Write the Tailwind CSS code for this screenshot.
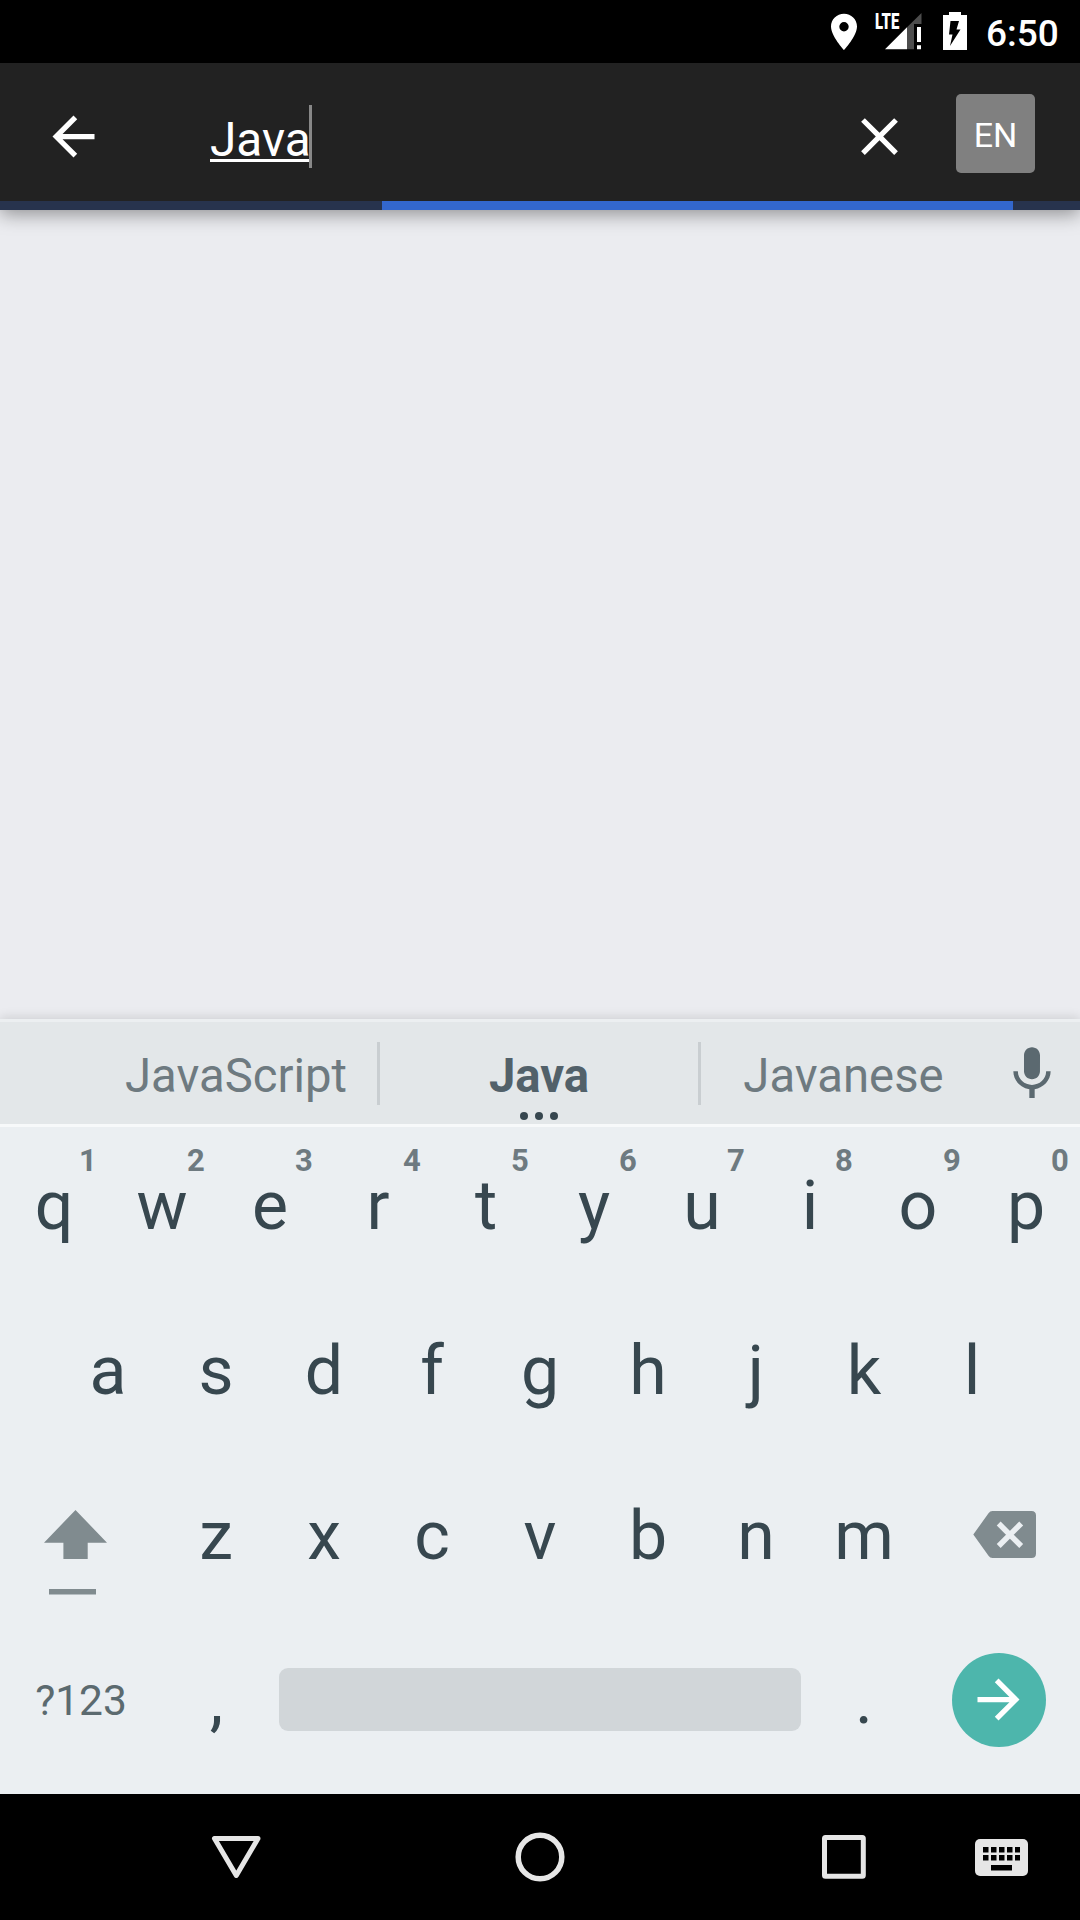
<!DOCTYPE html>
<html lang="en">
<head>
<meta charset="utf-8">
<title>Search</title>
<script src="https://cdn.jsdelivr.net/npm/@tailwindcss/browser@4"></script>
</head>
<body class="flex h-[1920px] w-[1080px] flex-col overflow-hidden bg-[#ebecf0] font-['Roboto',sans-serif]">

<!-- Status bar -->
<header class="flex h-[63px] shrink-0 items-start bg-black pl-[831px] text-white">
  <svg class="mt-[13px] h-[38px] w-[26px]" viewBox="0 0 26 38" fill="#fff"><path fill-rule="evenodd" d="M13 .7C5.800.7 0 6.300 0 13.600C0 23 13 37.300 13 37.300S26 23 26 13.600C26 6.300 20.200.7 13 .7ZM13 9a4.700 4.700 0 1 1 0 9.400A4.700 4.700 0 1 1 13 9Z"/></svg>
  <div class="relative ml-[18px] h-[50px] w-[48px]">
    <span class="absolute left-0 top-[11px] origin-left scale-x-[0.66] text-[22.500px]/[21px] font-black">LTE</span>
    <svg class="absolute left-0 top-0" width="48" height="50" fill="#fff"><path d="M10 49.300L32 27.300V49.300Z"/><path fill="#4d4d4d" d="M32 27.300L46.500 13V24H39V49.300H32Z"/><path d="M42 27h4v15h-4zM42 45.300h4v4h-4z"/></svg>
  </div>
  <svg class="ml-5 mt-3 h-[38px] w-[24px]" viewBox="0 0 24 38"><path fill="#fff" d="M6 0H18V3H24V38H0V3H6Z"/><path d="M7.500 9H16L13.500 17.500H17.500L7 34L9.500 22.500H6Z"/></svg>
  <span class="ml-[19px] mt-[12px] text-[37px]/[44px] font-medium">6:50</span>
</header>

<!-- Search bar -->
<section class="relative z-10 h-[147px] shrink-0 bg-[#222222] shadow-[0_4px_18px_rgba(0,0,0,0.4)]">
  <div class="flex h-[137px] items-start">
    <svg class="ml-[42px] mt-[42px] h-[63px] w-[63px]" viewBox="0 0 24 24" fill="#fff"><path d="M20 11H7.830l5.590-5.590L12 4l-8 8 8 8 1.410-1.410L7.830 13H20v-2z"/></svg>
    <div class="ml-[105px] mt-[42px] flex h-[63px] w-[638px]">
      <div class="h-[57px] w-[101px] border-b-[3px] border-white text-[47.750px]/[70px] text-white">Java</div>
      <div class="-ml-[2px] h-[63px] w-[3px] bg-[#888888]"></div>
    </div>
    <svg class="mt-[42px] h-[63px] w-[63px]" viewBox="0 0 24 24" fill="#fff"><path d="M19 6.410L17.590 5 12 10.590 6.410 5 5 6.410 10.590 12 5 17.590 6.410 19 12 13.410 17.590 19 19 17.590 13.410 12z"/></svg>
    <div class="ml-[45px] mt-[31px] flex h-[79px] w-[79px] items-center justify-center rounded-[5px] bg-[#808080] pt-[2px] text-[34px]/[40px] text-white">EN</div>
  </div>
  <div class="mt-[0.500px] flex h-[9px] bg-[#27334d] pl-[382px]"><div class="w-[631px] bg-[#3367cd]"></div></div>
</section>

<main class="flex-1"></main>

<!-- Suggestions -->
<section class="flex h-[108px] shrink-0 items-start border-y-[3px] border-t-[#eceff1] border-b-[#f7f9fa] bg-[#e3e7e9] pl-[95px] text-[47.250px]/[63px] text-[#6e7a80] shadow-[0_-2px_10px_rgba(0,0,0,0.120)]">
  <div class="mt-[23px] w-[282px] text-center">JavaScript</div>
  <div class="mt-[20px] h-[63px] w-[3px] bg-[#c9ced1]"></div>
  <div class="w-[318px] text-center">
    <div class="mt-[23px] h-[63px] font-bold text-[#52616a]">Java</div>
    <div class="mt-[4px] flex justify-center gap-[7px]"><i class="h-2 w-2 rounded-full bg-[#37474f]"></i><i class="h-2 w-2 rounded-full bg-[#37474f]"></i><i class="h-2 w-2 rounded-full bg-[#37474f]"></i></div>
  </div>
  <div class="mt-[20px] h-[63px] w-[3px] bg-[#c9ced1]"></div>
  <div class="mt-[23px] w-[285px] text-center">Javanese</div>
  <svg class="ml-[14px] mt-[20px] h-[64px] w-[64px]" viewBox="0 0 24 24" fill="#5b6970"><path d="M12 14c1.660 0 2.990-1.340 2.990-3L15 5c0-1.660-1.340-3-3-3S9 3.340 9 5v6c0 1.660 1.340 3 3 3zm5.300-3c0 3-2.540 5.100-5.300 5.100S6.700 14 6.700 11H5c0 3.410 2.720 6.230 6 6.720V21h2v-3.280c3.280-.48 6-3.300 6-6.720h-1.700z"/></svg>
</section>

<!-- Keyboard -->
<section class="h-[667px] shrink-0 bg-[#ebeff2] text-center text-[68px]/[158px] text-[#37474f]">
  <div class="grid h-[162px] grid-cols-10">
    <div class="relative">q<sup class="absolute left-[78px] top-[16px] w-5 text-[31px]/[36px] font-bold text-[#6e7a80]">1</sup></div>
    <div class="relative">w<sup class="absolute left-[78px] top-[16px] w-5 text-[31px]/[36px] font-bold text-[#6e7a80]">2</sup></div>
    <div class="relative">e<sup class="absolute left-[78px] top-[16px] w-5 text-[31px]/[36px] font-bold text-[#6e7a80]">3</sup></div>
    <div class="relative">r<sup class="absolute left-[78px] top-[16px] w-5 text-[31px]/[36px] font-bold text-[#6e7a80]">4</sup></div>
    <div class="relative">t<sup class="absolute left-[78px] top-[16px] w-5 text-[31px]/[36px] font-bold text-[#6e7a80]">5</sup></div>
    <div class="relative">y<sup class="absolute left-[78px] top-[16px] w-5 text-[31px]/[36px] font-bold text-[#6e7a80]">6</sup></div>
    <div class="relative">u<sup class="absolute left-[78px] top-[16px] w-5 text-[31px]/[36px] font-bold text-[#6e7a80]">7</sup></div>
    <div class="relative">i<sup class="absolute left-[78px] top-[16px] w-5 text-[31px]/[36px] font-bold text-[#6e7a80]">8</sup></div>
    <div class="relative">o<sup class="absolute left-[78px] top-[16px] w-5 text-[31px]/[36px] font-bold text-[#6e7a80]">9</sup></div>
    <div class="relative">p<sup class="absolute left-[78px] top-[16px] w-5 text-[31px]/[36px] font-bold text-[#6e7a80]">0</sup></div>
  </div>
  <div class="mx-[54px] mt-[3px] grid h-[165px] grid-cols-9">
    <div>a</div><div>s</div><div>d</div><div>f</div><div>g</div><div>h</div><div>j</div><div>k</div><div>l</div>
  </div>
  <div class="flex h-[165px]">
    <svg class="w-[162px] shrink-0" viewBox="0 0 162 165" fill="#808b8f"><path d="M75.500 53L107 85.700H87.700V102H63.400V85.700H44ZM49 132H96V137.500H49Z"/></svg>
    <div class="grid w-[756px] grid-cols-7"><div>z</div><div>x</div><div>c</div><div>v</div><div>b</div><div>n</div><div>m</div></div>
    <svg class="w-[162px] shrink-0" viewBox="0 0 162 165"><path fill="#808b8f" d="M74.500 54H113.500Q118 54 118 58.500V96.500Q118 101 113.500 101H74.500Q72 101 70.500 98.700L55.300 77.500L70.500 56.300Q72 54 74.500 54Z"/><path d="M80.700 66.500L103.200 89M103.200 66.500L80.700 89" stroke="#ebeff2" stroke-width="5.500"/></svg>
  </div>
  <div class="flex h-[165px]">
    <div class="w-[162px] text-[42.500px]/[158px] text-[#5b6a6f]">?123</div>
    <div class="w-[108px] pl-px leading-[156px]">,</div>
    <div class="ml-[9px] mt-[46px] h-[63px] w-[522px] rounded-[9px] bg-[#d1d6d9]"></div>
    <div class="ml-[9px] w-[108px] leading-[156px]">.</div>
    <div class="ml-[34px] mt-[31px] flex h-[94px] w-[94px] items-center justify-center rounded-full bg-[#4db6ac]"><svg class="mb-px mr-px h-[63px] w-[63px]" viewBox="0 0 24 24" fill="#fff"><path d="M12 4l-1.410 1.410L16.170 11H4v2h12.170l-5.580 5.590L12 20l8-8z"/></svg></div>
  </div>
</section>

<!-- Navigation bar -->
<nav class="flex h-[126px] shrink-0 items-center bg-black pl-[204px]">
  <svg class="h-16 w-16" viewBox="0 0 64 64" fill="none" stroke="#e6e6e6" stroke-width="5" stroke-linejoin="round"><path d="M10.500 13.500H54L32.300 50.500Z"/></svg>
  <svg class="ml-[240px] h-16 w-16" viewBox="0 0 64 64" fill="none" stroke="#e6e6e6" stroke-width="5.500"><circle cx="32" cy="32" r="21.800"/></svg>
  <svg class="ml-[240px] h-16 w-16" viewBox="0 0 64 64" fill="none" stroke="#e6e6e6" stroke-width="5" stroke-linejoin="round"><rect x="12.500" y="12.500" width="38.800" height="38.800" rx="1"/></svg>
  <svg class="ml-[99px] h-[64px] w-[53px]" viewBox="0 0 53 64"><rect y="14" width="53" height="37" rx="5" fill="#e6e6e6"/><path d="M8 22h5.500v5.500H8zM16 22h5.500v5.500H16zM24 22h5.500v5.500H24zM32 22h5.500v5.500H32zM40 22h5v5.500H40zM8 30h5.500v5.500H8zM16 30h5.500v5.500H16zM24 30h5.500v5.500H24zM32 30h5.500v5.500H32zM40 30h5v5.500H40zM16 40h21v5.500H16z"/></svg>
</nav>
</body>
</html>
